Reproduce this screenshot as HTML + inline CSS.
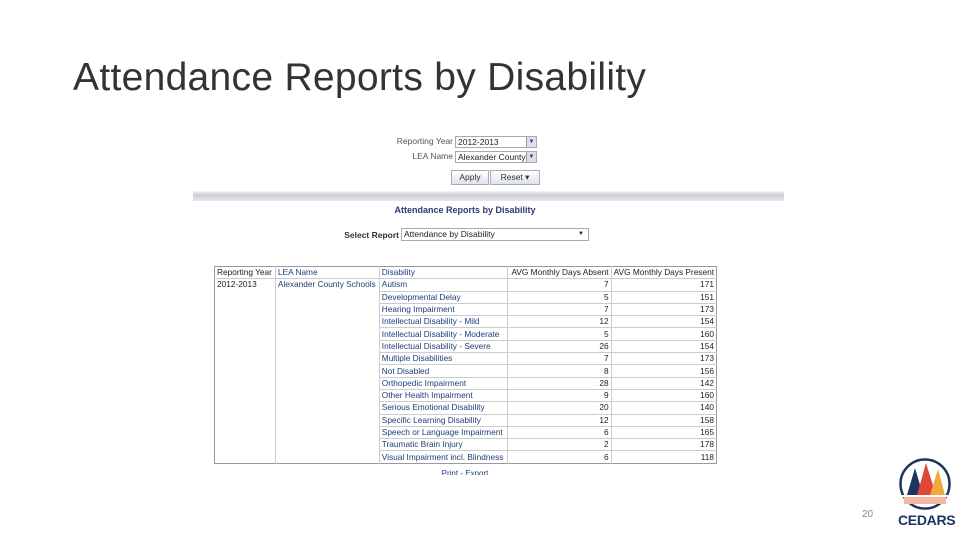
<!DOCTYPE html>
<html><head><style>
body{margin:0;width:960px;height:540px;background:#fff;position:relative;overflow:hidden;font-family:"Liberation Sans",sans-serif}
.a{position:absolute}
h1{position:absolute;left:73px;top:56px;margin:0;font-weight:normal;font-size:39px;color:#333;font-family:"Liberation Sans",sans-serif;letter-spacing:0.3px}
.sm{font-size:8.5px;color:#333}
.sel{position:absolute;border:1px solid #aaa;background:#fff;height:10px;font-size:8.5px;line-height:10px;padding-left:2px;color:#222;overflow:hidden;white-space:nowrap}
.dd{position:absolute;right:0;top:0;width:9px;height:10px;background:#dde;border-left:1px solid #99a;font-size:6px;text-align:center;color:#336}
table{position:absolute;left:214px;top:266px;border-collapse:collapse;font-size:8.3px;width:503px;border:1px solid #999}
td{height:11.3px;padding:0 2px;line-height:11px;white-space:nowrap;color:#222}
td.b{color:#1c3e7a}
td.n{text-align:right;border-left:1px solid #ccc}
tr.r td.c{border-top:1px solid #ccc}
tr.h td{border-bottom:1px solid #ccc}
</style></head><body>
<h1>Attendance Reports by Disability</h1>
<div class="a sm" style="left:380px;top:136px;width:73px;text-align:right;color:#555">Reporting Year</div>
<div class="sel" style="left:455px;top:136px;width:78px">2012-2013<div class="dd">▼</div></div>
<div class="a sm" style="left:380px;top:151px;width:73px;text-align:right;color:#555">LEA Name</div>
<div class="sel" style="left:455px;top:151px;width:78px">Alexander County<div class="dd">▼</div></div>
<div class="a sm" style="left:451px;top:170px;width:36px;height:13px;border:1px solid #aab;background:linear-gradient(#fff,#dde3ee);text-align:center;line-height:13px">Apply</div>
<div class="a sm" style="left:490px;top:170px;width:48px;height:13px;border:1px solid #aab;background:linear-gradient(#fff,#dde3ee);text-align:center;line-height:13px">Reset ▾</div>
<div class="a" style="left:193px;top:191px;width:591px;height:10px;background:linear-gradient(#f4f5f7,#c9ccd2 40%,#e6e8eb)"></div>
<div class="a" style="left:300px;top:205px;width:330px;text-align:center;font-size:9px;font-weight:bold;color:#2e3a6a">Attendance Reports by Disability</div>
<div class="a" style="left:330px;top:230px;width:69px;text-align:right;font-size:8.5px;font-weight:bold;color:#333">Select Report</div>
<div class="sel" style="left:401px;top:228px;width:184px;height:11px">Attendance by Disability<span style="position:absolute;right:4px;font-size:6px">▼</span></div>
<table>
<tr class="h"><td style="width:57px">Reporting Year</td><td class="b" style="width:100px;border-left:1px solid #ccc">LEA Name</td><td class="b" style="width:125px;border-left:1px solid #ccc">Disability</td><td class="n" style="width:100px">AVG Monthly Days Absent</td><td class="n">AVG Monthly Days Present</td></tr>
<tr><td rowspan="16" style="vertical-align:top;border-right:1px solid #ccc">2012-2013</td><td rowspan="16" class="b" style="vertical-align:top;border-right:1px solid #ccc">Alexander County Schools</td><td class="b">Autism</td><td class="n">7</td><td class="n">171</td></tr>
<tr class="r"><td class="b c">Developmental Delay</td><td class="n c">5</td><td class="n c">151</td></tr>
<tr class="r"><td class="b c">Hearing Impairment</td><td class="n c">7</td><td class="n c">173</td></tr>
<tr class="r"><td class="b c">Intellectual Disability - Mild</td><td class="n c">12</td><td class="n c">154</td></tr>
<tr class="r"><td class="b c">Intellectual Disability - Moderate</td><td class="n c">5</td><td class="n c">160</td></tr>
<tr class="r"><td class="b c">Intellectual Disability - Severe</td><td class="n c">26</td><td class="n c">154</td></tr>
<tr class="r"><td class="b c">Multiple Disabilities</td><td class="n c">7</td><td class="n c">173</td></tr>
<tr class="r"><td class="b c">Not Disabled</td><td class="n c">8</td><td class="n c">156</td></tr>
<tr class="r"><td class="b c">Orthopedic Impairment</td><td class="n c">28</td><td class="n c">142</td></tr>
<tr class="r"><td class="b c">Other Health Impairment</td><td class="n c">9</td><td class="n c">160</td></tr>
<tr class="r"><td class="b c">Serious Emotional Disability</td><td class="n c">20</td><td class="n c">140</td></tr>
<tr class="r"><td class="b c">Specific Learning Disability</td><td class="n c">12</td><td class="n c">158</td></tr>
<tr class="r"><td class="b c">Speech or Language Impairment</td><td class="n c">6</td><td class="n c">165</td></tr>
<tr class="r"><td class="b c">Traumatic Brain Injury</td><td class="n c">2</td><td class="n c">178</td></tr>
<tr class="r"><td class="b c">Visual Impairment incl. Blindness</td><td class="n c">6</td><td class="n c">118</td></tr>
</table>
<div class="a" style="left:430px;top:470px;width:70px;height:5px;overflow:hidden;font-size:8px;color:#1c3e7a;text-align:center;line-height:8px">Print - Export</div>
<div class="a" style="left:862px;top:509px;font-size:10px;color:#888">20</div>
<svg class="a" style="left:896px;top:458px" width="58" height="52" viewBox="0 0 58 52">
<circle cx="29" cy="26" r="24.5" fill="#fff" stroke="#1d3461" stroke-width="2.5"/>
<polygon points="19,10 11,37 27,37" fill="#1d3461"/>
<polygon points="30,5 21,37 40,37" fill="#e2463a"/>
<polygon points="42,11 34,37 49,37" fill="#f0a83a"/>
<rect x="6" y="37" width="46" height="2" fill="#fff"/>
<rect x="8" y="39" width="42" height="7" fill="#f4b8a0"/>
</svg>
<div class="a" style="left:898px;top:512px;font-size:14px;font-weight:bold;color:#1d3461;letter-spacing:-0.3px">CEDARS</div>
</body></html>
